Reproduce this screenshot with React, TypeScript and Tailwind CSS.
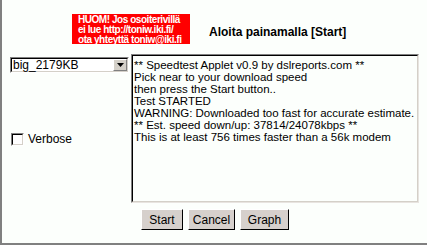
import React from "react";

const lines = [
  "** Speedtest Applet v0.9 by dslreports.com **",
  "Pick near to your download speed",
  "then press the Start button..",
  "Test STARTED",
  "WARNING: Downloaded too fast for accurate estimate.",
  "** Est. speed down/up: 37814/24078kbps **",
  "This is at least 756 times faster than a 56k modem",
];

function Btn({ label, w }: { label: string; w: string }) {
  return (
    <div
      className={`${w} h-[21px] bg-[#d6d0cc] border border-t-white border-l-white border-r-black border-b-black flex items-center justify-center text-[12px] text-black`}
    >
      {label}
    </div>
  );
}

export default function App() {
  return (
    <div
      className="w-[427px] h-[245px] bg-[#fcfffc] border-l-2 border-b-2 border-[#808080] flex flex-col"
      style={{ fontFamily: '"Liberation Sans", Arial, sans-serif' }}
    >
      <div className="flex items-center pt-[14px] pl-[70px]">
        <div className="w-[118px] h-[30px] bg-[#ff0000] text-white font-bold text-[10px] leading-[10px] tracking-[-0.45px] pl-[6px] pt-[1px] whitespace-nowrap overflow-hidden">
          <div>HUOM! Jos osoiterivillä</div>
          <div>ei lue http://toniw.iki.fi/</div>
          <div>ota yhteyttä toniw@iki.fi</div>
        </div>
        <div className="ml-[19px] mt-[5px] font-bold text-[12px] text-black">
          Aloita painamalla [Start]
        </div>
      </div>
      <div className="flex mt-[10px] pl-[8px]">
        <div className="w-[119px] flex flex-col pt-[3px]">
          <div className="h-[16px] w-[119px] border border-t-[#808080] border-l-[#808080] border-r-white border-b-white">
            <div className="h-full border border-t-black border-l-black border-r-[#d4d0c8] border-b-[#d4d0c8] bg-white flex items-center">
              <span className="flex-1 text-[12px] leading-[12px] pl-[1px] text-black">big_2179KB</span>
              <div className="w-[14px] h-full bg-[#d4d0c8] border border-t-white border-l-white border-r-[#808080] border-b-[#808080] flex items-center justify-center">
                <svg width="7" height="4" viewBox="0 0 7 4">
                  <path d="M0 0H7L3.5 4Z" fill="#000" />
                </svg>
              </div>
            </div>
          </div>
          <div className="flex items-center mt-[57px] ml-[1px]">
            <div className="w-[13px] h-[13px] border border-t-[#808080] border-l-[#808080] border-r-white border-b-white">
              <div className="w-full h-full border border-t-black border-l-black border-r-[#d4d0c8] border-b-[#d4d0c8] bg-white" />
            </div>
            <span className="ml-[4px] text-[12px] text-black">Verbose</span>
          </div>
        </div>
        <div className="ml-[2px] w-[288px] h-[149px] border border-t-[#808080] border-l-[#808080] border-r-[#e8e4e0] border-b-[#e8e4e0]">
          <div className="w-full h-full border border-t-black border-l-black border-r-[#d4d0c8] border-b-[#d4d0c8] bg-[#fcfffc] pl-[1px] pt-[3px] text-[11.5px] leading-[12px] text-black">
            {lines.map((l) => (
              <div key={l} className="whitespace-nowrap">{l}</div>
            ))}
          </div>
        </div>
      </div>
      <div className="flex gap-[5px] mt-[6px] pl-[139px]">
        <Btn label="Start" w="w-[42px]" />
        <Btn label="Cancel" w="w-[47px]" />
        <Btn label="Graph" w="w-[49px]" />
      </div>
    </div>
  );
}
